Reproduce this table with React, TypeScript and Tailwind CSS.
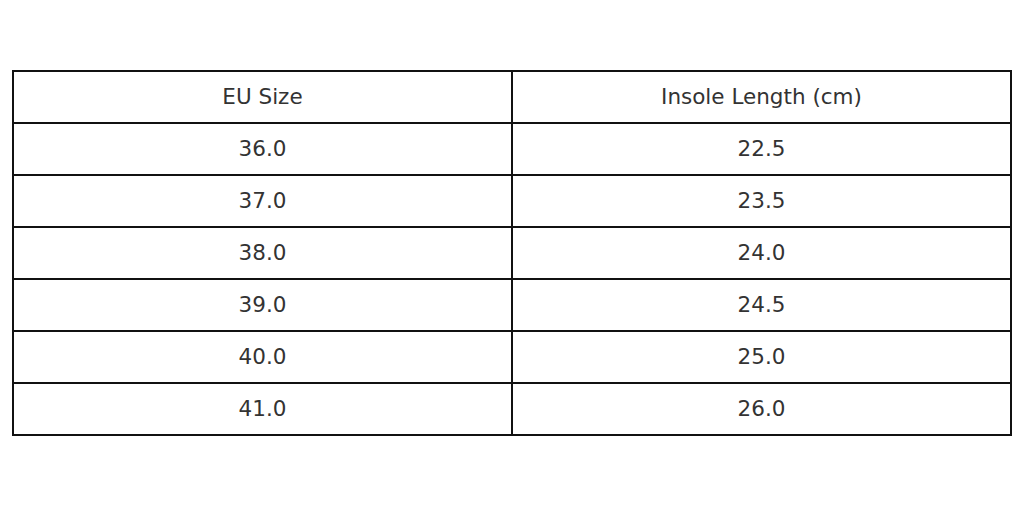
const rows: [string, string][] = [
  ["36.0", "22.5"],
  ["37.0", "23.5"],
  ["38.0", "24.0"],
  ["39.0", "24.5"],
  ["40.0", "25.0"],
  ["41.0", "26.0"],
];

export default function App() {
  return (
    <div className="w-[1024px] h-[506px] bg-white pt-[70px] pl-[12px] font-['DejaVu_Sans',sans-serif] text-[#333333]">
      <table className="w-[1000px] border-collapse table-fixed text-[21.5px] leading-none">
        <thead>
          <tr>
            <th className="h-[52px] pb-[1px] border-2 border-[#111] font-normal">EU Size</th>
            <th className="h-[52px] pb-[1px] border-2 border-[#111] font-normal">Insole Length (cm)</th>
          </tr>
        </thead>
        <tbody>
          {rows.map(([eu, cm]) => (
            <tr key={eu}>
              <td className="h-[52px] pb-[1px] border-2 border-[#111] text-center">{eu}</td>
              <td className="h-[52px] pb-[1px] border-2 border-[#111] text-center">{cm}</td>
            </tr>
          ))}
        </tbody>
      </table>
    </div>
  );
}
